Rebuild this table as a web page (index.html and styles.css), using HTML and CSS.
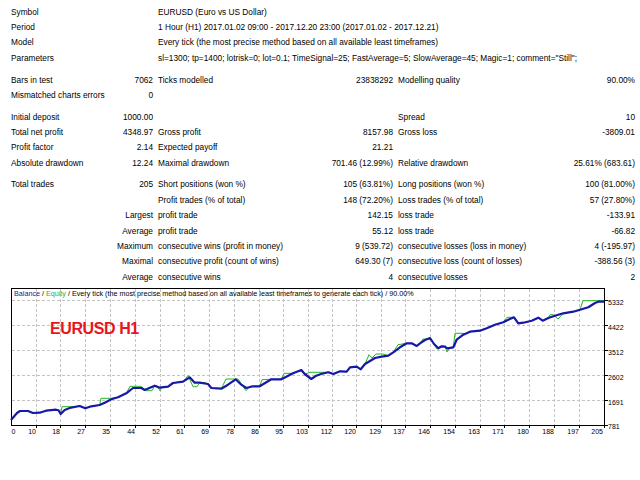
FILE: index.html
```html
<!DOCTYPE html>
<html>
<head>
<meta charset="utf-8">
<link rel="stylesheet" href="styles.css">
</head>
<body>
<div class="report">
  <div class="group">
    <span class="lbl span2">Symbol</span><span class="txt span4">EURUSD (Euro vs US Dollar)</span>
    <span class="lbl span2">Period</span><span class="txt span4">1 Hour (H1) 2017.01.02 09:00 - 2017.12.20 23:00 (2017.01.02 - 2017.12.21)</span>
    <span class="lbl span2">Model</span><span class="txt span4">Every tick (the most precise method based on all available least timeframes)</span>
    <span class="lbl span2">Parameters</span><span class="txt span4">sl=1300; tp=1400; lotrisk=0; lot=0.1; TimeSignal=25; FastAverage=5; SlowAverage=45; Magic=1; comment="Still";</span>
  </div>
  <div class="group">
    <span class="lbl">Bars in test</span><span class="num">7062</span><span class="lbl">Ticks modelled</span><span class="num">23838292</span><span class="lbl">Modelling quality</span><span class="num">90.00%</span>
    <span class="lbl">Mismatched charts errors</span><span class="num">0</span><span></span><span></span><span></span><span></span>
  </div>
  <div class="group">
    <span class="lbl">Initial deposit</span><span class="num">1000.00</span><span></span><span></span><span class="lbl">Spread</span><span class="num">10</span>
    <span class="lbl">Total net profit</span><span class="num">4348.97</span><span class="lbl">Gross profit</span><span class="num">8157.98</span><span class="lbl">Gross loss</span><span class="num">-3809.01</span>
    <span class="lbl">Profit factor</span><span class="num">2.14</span><span class="lbl">Expected payoff</span><span class="num">21.21</span><span></span><span></span>
    <span class="lbl">Absolute drawdown</span><span class="num">12.24</span><span class="lbl">Maximal drawdown</span><span class="num">701.46 (12.99%)</span><span class="lbl">Relative drawdown</span><span class="num">25.61% (683.61)</span>
  </div>
  <div class="group">
    <span class="lbl">Total trades</span><span class="num">205</span><span class="lbl">Short positions (won %)</span><span class="num">105 (63.81%)</span><span class="lbl">Long positions (won %)</span><span class="num">100 (81.00%)</span>
    <span></span><span></span><span class="lbl">Profit trades (% of total)</span><span class="num">148 (72.20%)</span><span class="lbl">Loss trades (% of total)</span><span class="num">57 (27.80%)</span>
    <span></span><span class="num">Largest</span><span class="lbl">profit trade</span><span class="num">142.15</span><span class="lbl">loss trade</span><span class="num">-133.91</span>
    <span></span><span class="num">Average</span><span class="lbl">profit trade</span><span class="num">55.12</span><span class="lbl">loss trade</span><span class="num">-66.82</span>
    <span></span><span class="num">Maximum</span><span class="lbl">consecutive wins (profit in money)</span><span class="num">9 (539.72)</span><span class="lbl">consecutive losses (loss in money)</span><span class="num">4 (-195.97)</span>
    <span></span><span class="num">Maximal</span><span class="lbl">consecutive profit (count of wins)</span><span class="num">649.30 (7)</span><span class="lbl">consecutive loss (count of losses)</span><span class="num">-388.56 (3)</span>
    <span></span><span class="num">Average</span><span class="lbl">consecutive wins</span><span class="num">4</span><span class="lbl">consecutive losses</span><span class="num">2</span>
  </div>
</div>
<svg class="chart" width="640" height="160" viewBox="0 285 640 160" xmlns="http://www.w3.org/2000/svg">
  <g class="grid">
    <line x1="36.5" y1="289" x2="36.5" y2="425"/><line x1="60.5" y1="289" x2="60.5" y2="425"/><line x1="85.5" y1="289" x2="85.5" y2="425"/><line x1="110.5" y1="289" x2="110.5" y2="425"/><line x1="135.5" y1="289" x2="135.5" y2="425"/><line x1="160.5" y1="289" x2="160.5" y2="425"/><line x1="184.5" y1="289" x2="184.5" y2="425"/><line x1="209.5" y1="289" x2="209.5" y2="425"/><line x1="234.5" y1="289" x2="234.5" y2="425"/><line x1="259.5" y1="289" x2="259.5" y2="425"/><line x1="283.5" y1="289" x2="283.5" y2="425"/><line x1="308.5" y1="289" x2="308.5" y2="425"/><line x1="332.5" y1="289" x2="332.5" y2="425"/><line x1="356.5" y1="289" x2="356.5" y2="425"/><line x1="381.5" y1="289" x2="381.5" y2="425"/><line x1="405.5" y1="289" x2="405.5" y2="425"/><line x1="430.5" y1="289" x2="430.5" y2="425"/><line x1="455.5" y1="289" x2="455.5" y2="425"/><line x1="480.5" y1="289" x2="480.5" y2="425"/><line x1="504.5" y1="289" x2="504.5" y2="425"/><line x1="529.5" y1="289" x2="529.5" y2="425"/><line x1="554.5" y1="289" x2="554.5" y2="425"/><line x1="579.5" y1="289" x2="579.5" y2="425"/>
    <line x1="12" y1="300.5" x2="604" y2="300.5"/><line x1="12" y1="325.5" x2="604" y2="325.5"/><line x1="12" y1="350.5" x2="604" y2="350.5"/><line x1="12" y1="375.5" x2="604" y2="375.5"/><line x1="12" y1="400.5" x2="604" y2="400.5"/>
  </g>
  <rect class="frame" x="11.5" y="288.5" width="593" height="137"/>
  <g class="ticks">
    <line x1="605" y1="300.5" x2="608" y2="300.5"/><line x1="605" y1="325.5" x2="608" y2="325.5"/><line x1="605" y1="350.5" x2="608" y2="350.5"/><line x1="605" y1="375.5" x2="608" y2="375.5"/><line x1="605" y1="400.5" x2="608" y2="400.5"/><line x1="605" y1="425.5" x2="608" y2="425.5"/>
    <line x1="36.5" y1="426" x2="36.5" y2="428"/><line x1="60.5" y1="426" x2="60.5" y2="428"/><line x1="85.5" y1="426" x2="85.5" y2="428"/><line x1="110.5" y1="426" x2="110.5" y2="428"/><line x1="135.5" y1="426" x2="135.5" y2="428"/><line x1="160.5" y1="426" x2="160.5" y2="428"/><line x1="184.5" y1="426" x2="184.5" y2="428"/><line x1="209.5" y1="426" x2="209.5" y2="428"/><line x1="234.5" y1="426" x2="234.5" y2="428"/><line x1="259.5" y1="426" x2="259.5" y2="428"/><line x1="283.5" y1="426" x2="283.5" y2="428"/><line x1="308.5" y1="426" x2="308.5" y2="428"/><line x1="332.5" y1="426" x2="332.5" y2="428"/><line x1="356.5" y1="426" x2="356.5" y2="428"/><line x1="381.5" y1="426" x2="381.5" y2="428"/><line x1="405.5" y1="426" x2="405.5" y2="428"/><line x1="430.5" y1="426" x2="430.5" y2="428"/><line x1="455.5" y1="426" x2="455.5" y2="428"/><line x1="480.5" y1="426" x2="480.5" y2="428"/><line x1="504.5" y1="426" x2="504.5" y2="428"/><line x1="529.5" y1="426" x2="529.5" y2="428"/><line x1="554.5" y1="426" x2="554.5" y2="428"/><line x1="579.5" y1="426" x2="579.5" y2="428"/><line x1="604.5" y1="426" x2="604.5" y2="428"/>
  </g>
  <polyline class="equity" points="11,420 17,413 20,411 28,411 33,413 39.7,412.7 46,410.7 56,409.7 58.5,410.3 60.7,414 62,406.7 70,406.7 79.7,406 85.3,408.3 91.3,406.3 99.7,405 101,398.3 111.3,398.3 118,397.3 126.3,393.3 130,386.3 141.3,386.3 146,390.7 152,390.7 154.7,385.7 157,385.7 160,390.7 162,387 168,386.7 172,383.3 183,381.7 188,375.7 193,386.7 197,386.7 199.7,382.7 205,382.7 208,384 211.3,388 221.3,388.7 226,379 238,379 246,390.7 250,386.3 259.7,386.3 262,379.7 271.3,379.3 281.3,379.3 284,373.3 293,373.3 301.3,370 305,374 310,372.3 330,372.3 333.3,374 340,371.3 346.7,371.7 350,367.3 356.7,366.7 360.7,369.3 365,364 369,354.7 372,358 376,354 383,354 388.3,355.7 393.3,352.3 398,344.7 406.7,343.3 411.7,343.3 416.7,346 420,343.3 423,339 431,339 434,344 437,349 441.7,346.3 445,346.7 447,352 449,348.3 453.3,347.3 455,333.3 463,333.3 465,334 470,331.7 480,330.7 486.7,328.3 495,324.7 503.3,322.3 507,317.3 514,317.3 518.3,323.3 523.3,322.7 531.7,320.7 538.3,317.7 542.7,320.7 548.3,318 550,314.7 553,314.7 558,319 563.3,313.3 573.3,311.7 580,309.7 583,300.7 604,300.7"/>
  <polyline class="balance" points="11,420 17,413 20,411 28,411 33,413 39.7,412.7 46,410.7 56,409.7 58.5,410.3 60.7,414 64.7,410 69.7,408 79.7,406 85.3,408.3 91.3,406.3 99.7,405 104.7,402.7 111.3,399.3 118,397.3 126.3,393.3 133,388 141.3,388 144.7,390 154.7,385.7 159.7,387.7 168,386.7 173,383 183,381.7 189.7,377.3 194.7,382.7 199.7,382.7 208,384 211.3,388 221.3,388.7 228,384.7 235.7,379.3 241.3,384.7 246.3,388 253,386.3 259.7,386.3 264.7,383.3 271.3,379.3 281.3,379.3 286.3,376.7 293,373.3 301.3,370 304.7,374 311.3,379 316.3,375.7 321,374 328.3,372.3 333.3,374 340,371.3 346.7,371.7 350,367.3 356.7,366.7 360.7,369.3 365,364 371.7,360 375,358 381.7,356.7 388.3,355.7 393.3,352.3 400,347.3 406.7,343.3 411.7,343.3 416.7,346 420,343.3 425,340 430,338 434,344 438.3,348.3 441.7,346.3 445,346.7 447.3,348.3 453.3,347.3 456.7,339.7 463.3,334.7 470,331.7 480,330.7 486.7,328.3 495,324.7 503.3,322.3 509.3,319.3 514,317.3 518.3,323.3 523.3,322.7 531.7,320.7 538.3,317.7 542.7,320.7 548.3,318 555,315.7 563.3,313.3 573.3,311.7 580,309.7 588.3,307.3 595,303 598.3,301.7 604,301.7"/>
  <text class="head" x="14" y="296"><tspan class="c-bal">Balance</tspan> / <tspan class="c-eq">Equity</tspan> / Every tick (the most precise method based on all available least timeframes to generate each tick) / 90.00%</text>
  <text class="title" x="50" y="334">EURUSD H1</text>
  <g class="ylab">
    <text x="608" y="305">5332</text><text x="608" y="330">4422</text><text x="608" y="355">3512</text><text x="608" y="380">2602</text><text x="608" y="405">1691</text><text x="608" y="429">781</text>
  </g>
  <g class="xlab">
    <text x="11.5" y="434" class="first">0</text><text x="36" y="434">10</text>
    <text x="60" y="434">18</text><text x="85" y="434">27</text><text x="110" y="434">35</text><text x="135" y="434">44</text><text x="160" y="434">52</text><text x="184" y="434">61</text><text x="209" y="434">69</text><text x="234" y="434">78</text><text x="259" y="434">86</text><text x="283" y="434">95</text><text x="308" y="434">103</text><text x="332" y="434">112</text><text x="356" y="434">120</text><text x="381" y="434">129</text><text x="405" y="434">137</text><text x="430" y="434">146</text><text x="455" y="434">154</text><text x="480" y="434">163</text><text x="504" y="434">171</text><text x="529" y="434">180</text><text x="554" y="434">188</text><text x="579" y="434">197</text><text x="603" y="434">205</text>
  </g>
</svg>
</body>
</html>
```

FILE: styles.css
```css
html, body {
  margin: 0;
  padding: 0;
  background: #ffffff;
}
body {
  width: 640px;
  height: 480px;
  overflow: hidden;
  font-family: "Liberation Sans", Arial, sans-serif;
  font-size: 8.3px;
  color: #000000;
}
.report {
  height: 285px;
  box-sizing: border-box;
  padding-top: 4px;
}
.group {
  display: grid;
  grid-template-columns: 101px 46px 144px 96px 144px 98px;
  grid-auto-rows: 15.4px;
  align-items: center;
  margin-left: 9px;
  margin-bottom: 6.3px;
}
.group > span {
  padding: 0 3px 0 2px;
  white-space: nowrap;
}
.span2 { grid-column: span 2; }
.span4 { grid-column: span 4; }
.num { text-align: right; }
.chart {
  display: block;
}
.grid line {
  stroke: #c4c4c4;
  stroke-width: 1;
  stroke-dasharray: 3 2;
}
.frame {
  fill: none;
  stroke: #000000;
  stroke-width: 1;
}
.ticks line {
  stroke: #000000;
  stroke-width: 1;
}
.equity {
  fill: none;
  stroke: #22b822;
  stroke-width: 1;
}
.balance {
  fill: none;
  stroke: #1818a8;
  stroke-width: 2.2;
  stroke-linejoin: round;
}
.head {
  font-family: "Liberation Sans", Arial, sans-serif;
  font-size: 7.2px;
  fill: #000000;
}
.c-bal { fill: #1a1a9a; }
.c-eq { fill: #22b822; }
.title {
  font-family: "Liberation Sans", Arial, sans-serif;
  font-size: 16px;
  font-weight: bold;
  letter-spacing: -0.4px;
  fill: #e8141e;
}
.ylab text {
  font-family: "Liberation Sans", Arial, sans-serif;
  font-size: 7px;
  fill: #000000;
}
.xlab text {
  font-family: "Liberation Sans", Arial, sans-serif;
  font-size: 7px;
  fill: #000000;
  text-anchor: end;
}
.xlab .first {
  text-anchor: start;
}
```
